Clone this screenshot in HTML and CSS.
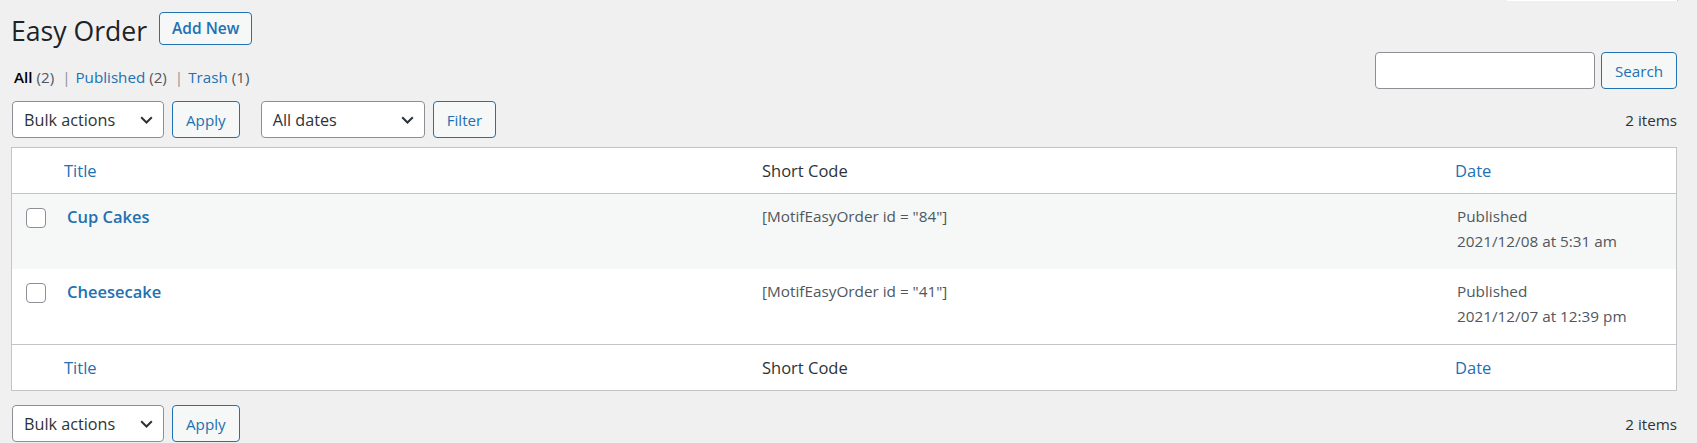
FILE: index.html
```html
<!DOCTYPE html>
<html lang="en">
<head>
  <meta charset="UTF-8">
  <title>Easy Order ‹ Admin</title>
  <meta name="viewport" content="width=device-width, initial-scale=1.0">
  <link rel="stylesheet" href="styles.css">
</head>
<body>
  <!-- screen options tab, clipped at the top edge -->
  <div class="screen-tab"></div>

  <div class="wrap">
    <div class="page-head">
      <h1 class="page-title">Easy Order</h1>
      <a class="title-action" href="#">Add New</a>
    </div>

    <div class="filters-row">
      <ul class="subsubsub">
        <li><a class="current" href="#">All <span class="count">(2)</span></a></li>
        <li class="sep">|</li>
        <li><a href="#">Published <span class="count">(2)</span></a></li>
        <li class="sep">|</li>
        <li><a href="#">Trash <span class="count">(1)</span></a></li>
      </ul>
      <div class="search-box">
        <input class="search-input" type="search">
        <button class="btn" type="button">Search</button>
      </div>
    </div>

    <div class="tablenav">
      <div class="actions">
        <div class="select select-bulk">
          <span>Bulk actions</span>
          <svg class="chevron" width="13" height="8" viewBox="0 0 13 8"><path d="M1.2 1.2l5.3 5.3 5.3-5.3" fill="none" stroke="#2c3338" stroke-width="2"/></svg>
        </div>
        <button class="btn" type="button">Apply</button>
      </div>
      <div class="actions">
        <div class="select select-dates">
          <span>All dates</span>
          <svg class="chevron" width="13" height="8" viewBox="0 0 13 8"><path d="M1.2 1.2l5.3 5.3 5.3-5.3" fill="none" stroke="#2c3338" stroke-width="2"/></svg>
        </div>
        <button class="btn" type="button">Filter</button>
      </div>
      <div class="displaying-num">2 items</div>
    </div>

    <table class="list-table">
      <colgroup>
        <col class="col-cb">
        <col class="col-title">
        <col class="col-code">
        <col>
      </colgroup>
      <thead>
        <tr>
          <th></th>
          <th><a href="#">Title</a></th>
          <th>Short Code</th>
          <th><a href="#">Date</a></th>
        </tr>
      </thead>
      <tbody>
        <tr>
          <td class="check-col"><input class="cb" type="checkbox"></td>
          <td class="title-col"><a class="row-title" href="#">Cup Cakes</a></td>
          <td>[MotifEasyOrder id = "84"]</td>
          <td class="date-col">Published<br>2021/12/08 at 5:31 am</td>
        </tr>
        <tr>
          <td class="check-col"><input class="cb" type="checkbox"></td>
          <td class="title-col"><a class="row-title" href="#">Cheesecake</a></td>
          <td>[MotifEasyOrder id = "41"]</td>
          <td class="date-col">Published<br>2021/12/07 at 12:39 pm</td>
        </tr>
      </tbody>
      <tfoot>
        <tr>
          <th></th>
          <th><a href="#">Title</a></th>
          <th>Short Code</th>
          <th><a href="#">Date</a></th>
        </tr>
      </tfoot>
    </table>

    <div class="tablenav tablenav-bottom">
      <div class="actions">
        <div class="select select-bulk">
          <span>Bulk actions</span>
          <svg class="chevron" width="13" height="8" viewBox="0 0 13 8"><path d="M1.2 1.2l5.3 5.3 5.3-5.3" fill="none" stroke="#2c3338" stroke-width="2"/></svg>
        </div>
        <button class="btn" type="button">Apply</button>
      </div>
      <div class="displaying-num">2 items</div>
    </div>
  </div>
</body>
</html>
```

FILE: styles.css
```css
body {
  margin: 0;
  background: #f0f0f1;
  color: #3c434a;
  font-family: 'Open Sans', 'Noto Sans', sans-serif;
  font-size: 16.5px;
  overflow: hidden;
}
a {
  color: #2271b1;
  text-decoration: none;
}
.screen-tab {
  position: absolute;
  top: 0;
  right: 19px;
  width: 170px;
  height: 1px;
  background: #fff;
  border-right: 1px solid #c3c4c7;
}
.wrap {
  padding: 0 20px 0 11px;
}
.page-head {
  display: flex;
  align-items: flex-start;
  padding-top: 12px;
  height: 33px;
}
.page-title {
  margin: 2px 12px 0 0;
  font-size: 26.6px;
  line-height: 34px;
  font-weight: 400;
  color: #1d2327;
}
.title-action {
  box-sizing: border-box;
  height: 33px;
  line-height: 31px;
  padding: 0 12px;
  border: 1px solid #2271b1;
  border-radius: 4px;
  background: #f6f7f7;
  font-size: 15.5px;
  font-weight: 600;
}
.filters-row {
  display: flex;
  justify-content: space-between;
  margin-top: 7px;
  height: 37px;
}
.subsubsub {
  list-style: none;
  display: flex;
  margin: 13px 0 0;
  padding: 0 0 0 3px;
  font-size: 15.2px;
  line-height: 25px;
  color: #8c8f94;
}
.subsubsub .current {
  color: #000;
  font-weight: 600;
}
.subsubsub .count {
  color: #50575e;
  font-weight: 400;
}
.subsubsub .sep {
  margin: 0 5px 0 8px;
}
.search-box {
  display: flex;
  gap: 6px;
}
.search-input {
  box-sizing: border-box;
  width: 220px;
  height: 37px;
  margin: 0;
  border: 1px solid #8c8f94;
  border-radius: 4px;
  background: #fff;
}
.btn {
  box-sizing: border-box;
  height: 37px;
  margin: 0;
  padding: 0 13px;
  border: 1px solid #2271b1;
  border-radius: 4px;
  background: #f6f7f7;
  color: #2271b1;
  font-family: inherit;
  font-size: 15.2px;
}
.tablenav {
  display: flex;
  align-items: center;
  height: 37px;
  margin: 12px 0 9px;
}
.tablenav-bottom {
  margin: 14px 0 0;
}
.actions {
  display: flex;
  gap: 8px;
  margin-right: 21px;
}
.actions:first-child {
  margin-left: 1px;
}
.select {
  box-sizing: border-box;
  height: 37px;
  display: flex;
  align-items: center;
  justify-content: space-between;
  padding: 0 10px 0 11px;
  border: 1px solid #8c8f94;
  border-radius: 4px;
  background: #fff;
  color: #2c3338;
  font-size: 16.2px;
}
.select-bulk { width: 152px; }
.select-dates { width: 164px; }
.chevron { display: block; }
.displaying-num {
  margin-left: auto;
  font-size: 15.2px;
  color: #2c3338;
}
.list-table {
  width: 100%;
  table-layout: fixed;
  border-collapse: separate;
  border-spacing: 0;
  border: 1px solid #c3c4c7;
  background: #fff;
}
.col-cb { width: 42px; }
.col-title { width: 698px; }
.col-code { width: 693px; }
.list-table th {
  padding: 10px;
  line-height: 25px;
  text-align: left;
  font-weight: 400;
  color: #2c3338;
}
.list-table thead th {
  border-bottom: 1px solid #c3c4c7;
}
.list-table tfoot th {
  border-top: 1px solid #c3c4c7;
}
.list-table td {
  padding: 10px 10px 15px;
  line-height: 25px;
  vertical-align: top;
  color: #50575e;
  font-size: 15.3px;
}
.list-table tbody tr:nth-child(odd) {
  background: #f6f7f7;
}
.list-table td.check-col {
  padding: 14px 0 0 14px;
}
.cb {
  appearance: none;
  display: block;
  box-sizing: border-box;
  width: 20px;
  height: 20px;
  margin: 0;
  border: 1px solid #8c8f94;
  border-radius: 4px;
  background: #fff;
}
.list-table td.title-col {
  padding-left: 13px;
}
.row-title {
  font-size: 16.5px;
  font-weight: 600;
}
.list-table td.date-col {
  padding-left: 12px;
}
```
